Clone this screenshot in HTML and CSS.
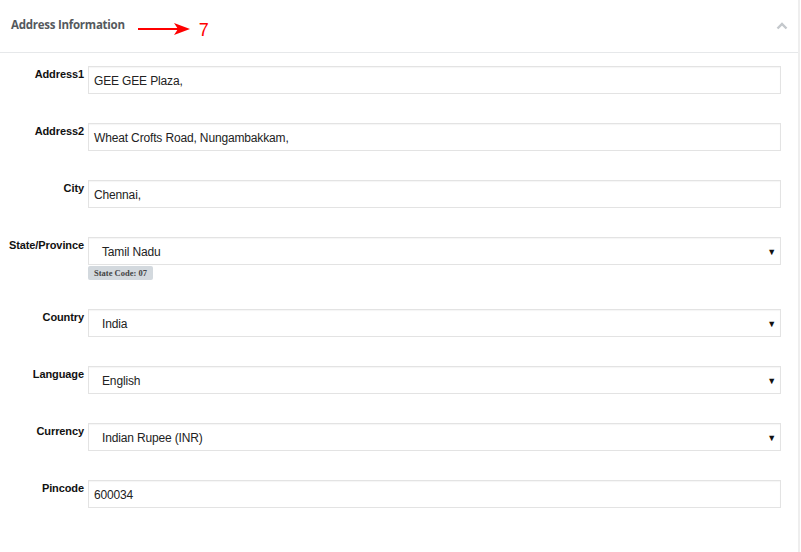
FILE: index.html
```html
<!DOCTYPE html>
<html>
<head>
<meta charset="utf-8">
<link rel="stylesheet" href="styles.css">
</head>
<body>
<div class="panel">
  <div class="panel-head">
    <div class="title-wrap">
      <span class="title">Address Information</span>
      <svg class="arrow" width="54" height="12" viewBox="0 0 54 12"><line x1="0" y1="6" x2="40" y2="6" stroke="#f00" stroke-width="2.2"/><polygon points="36,0 52,6 36,12 40,6" fill="#f00"/></svg>
      <span class="num">7</span>
    </div>
    <svg class="chev" width="12" height="8" viewBox="0 0 12 8"><polyline points="1.5,6.5 6,2 10.5,6.5" fill="none" stroke="#c4c8cc" stroke-width="2.4"/></svg>
  </div>
  <div class="form">
    <div class="row"><label class="lbl">Address1</label><div class="field"><div class="input">GEE GEE Plaza,</div></div></div>
    <div class="row"><label class="lbl">Address2</label><div class="field"><div class="input">Wheat Crofts Road, Nungambakkam,</div></div></div>
    <div class="row"><label class="lbl">City</label><div class="field"><div class="input">Chennai,</div></div></div>
    <div class="row"><label class="lbl">State/Province</label><div class="field"><div class="input select"><span>Tamil Nadu</span><span class="caret">▼</span></div><span class="badge">State Code: 07</span></div></div>
    <div class="row"><label class="lbl">Country</label><div class="field"><div class="input select"><span>India</span><span class="caret">▼</span></div></div></div>
    <div class="row"><label class="lbl">Language</label><div class="field"><div class="input select"><span>English</span><span class="caret">▼</span></div></div></div>
    <div class="row"><label class="lbl">Currency</label><div class="field"><div class="input select"><span>Indian Rupee (INR)</span><span class="caret">▼</span></div></div></div>
    <div class="row"><label class="lbl">Pincode</label><div class="field"><div class="input">600034</div></div></div>
  </div>
</div>
</body>
</html>
```
FILE: styles.css
```css
html, body { margin: 0; padding: 0; background: #fff; }
body { font-family: "Liberation Sans", Arial, sans-serif; }
.panel {
  width: 798px;
  height: 552px;
  border-right: 2px solid #eeeeee;
  box-sizing: content-box;
}
.panel-head {
  height: 52px;
  border-bottom: 1px solid #e6e8ea;
  display: flex;
  align-items: center;
  justify-content: space-between;
  padding: 0 10px 0 11px;
}
.title-wrap { display: flex; align-items: center; margin-top: 5px; }
.title {
  font-family: "Open Sans", sans-serif;
  font-weight: 700;
  font-size: 11.5px;
  letter-spacing: -0.25px;
  color: #55595d;
  margin-top: -8px;
}
.arrow { margin-left: 13px; }
.num {
  color: #f00;
  font-size: 18px;
  margin-left: 7px;
  line-height: 18px;
  margin-top: 2px;
}
.chev { margin-top: -1px; margin-right: 0; }
.form { padding-top: 13px; }
.row {
  display: flex;
  align-items: flex-start;
  margin-bottom: 29px;
}
.lbl {
  width: 84px;
  text-align: right;
  font-weight: 700;
  font-size: 11px;
  color: #111;
  line-height: 14px;
  padding-top: 1px;
  white-space: nowrap;
  letter-spacing: -0.1px;
}
.field {
  margin-left: 4px;
  width: 693px;
  display: flex;
  flex-direction: column;
  align-items: flex-start;
}
.input {
  box-sizing: border-box;
  width: 693px;
  height: 28px;
  border: 1px solid #e3e3e3;
  box-shadow: inset 0 1px 1px rgba(0,0,0,0.04);
  font-size: 12px;
  letter-spacing: -0.15px;
  color: #222;
  padding: 0 5px;
  display: flex;
  align-items: center;
  line-height: 28px;
  padding-top: 2px;
}
.select {
  padding-left: 13px;
  justify-content: space-between;
  padding-right: 4px;
}
.caret { font-size: 9px; color: #111; }
.badge {
  margin-top: 1px;
  background: #d3d9de;
  color: #444;
  font-family: "Liberation Serif", serif;
  font-weight: 700;
  font-size: 8.5px;
  line-height: 14px;
  padding: 0 6px;
  border-radius: 2px;
}
```
